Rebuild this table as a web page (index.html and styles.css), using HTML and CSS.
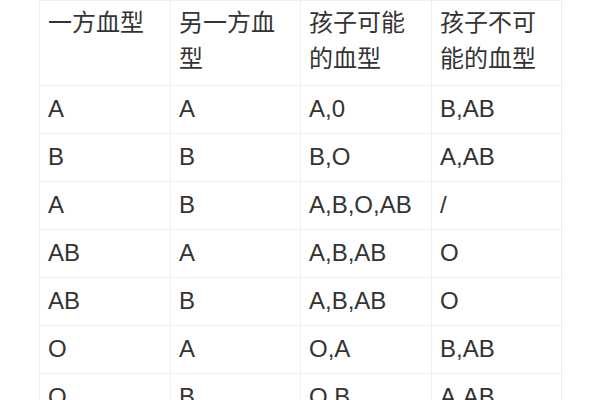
FILE: index.html
```html
<!DOCTYPE html>
<html lang="zh">
<head>
<meta charset="utf-8">
<link rel="stylesheet" href="styles.css">
</head>
<body>
<table class="blood">
  <colgroup>
    <col class="c1"><col class="c2"><col class="c3"><col class="c4">
  </colgroup>
  <thead>
    <tr><th>一方血型</th><th>另一方血型</th><th>孩子可能的血型</th><th>孩子不可能的血型</th></tr>
  </thead>
  <tbody>
    <tr><td>A</td><td>A</td><td>A,0</td><td>B,AB</td></tr>
    <tr><td>B</td><td>B</td><td>B,O</td><td>A,AB</td></tr>
    <tr><td>A</td><td>B</td><td>A,B,O,AB</td><td>/</td></tr>
    <tr><td>AB</td><td>A</td><td>A,B,AB</td><td>O</td></tr>
    <tr><td>AB</td><td>B</td><td>A,B,AB</td><td>O</td></tr>
    <tr><td>O</td><td>A</td><td>O,A</td><td>B,AB</td></tr>
    <tr><td>O</td><td>B</td><td>O,B</td><td>A,AB</td></tr>
  </tbody>
</table>
</body>
</html>
```
FILE: styles.css
```css
html, body {
  margin: 0;
  padding: 0;
  background: #ffffff;
}
body {
  font-family: "Liberation Sans", "Noto Sans CJK SC", sans-serif;
  color: #333333;
}
.blood {
  margin-left: 39px;
  border-collapse: collapse;
  table-layout: fixed;
  width: 522px;
}
.c1 { width: 131px; }
.c2 { width: 130px; }
.c3 { width: 131px; }
.c4 { width: 130px; }
.blood th,
.blood td {
  border: 1px solid #edf0ec;
  font-size: 24px;
  line-height: 36px;
  font-weight: normal;
  text-align: left;
  vertical-align: top;
  padding: 5px 8px 6px 8px;
  word-break: break-all;
}
.blood th {
  padding: 4px 8px 8px 8px;
}
```
